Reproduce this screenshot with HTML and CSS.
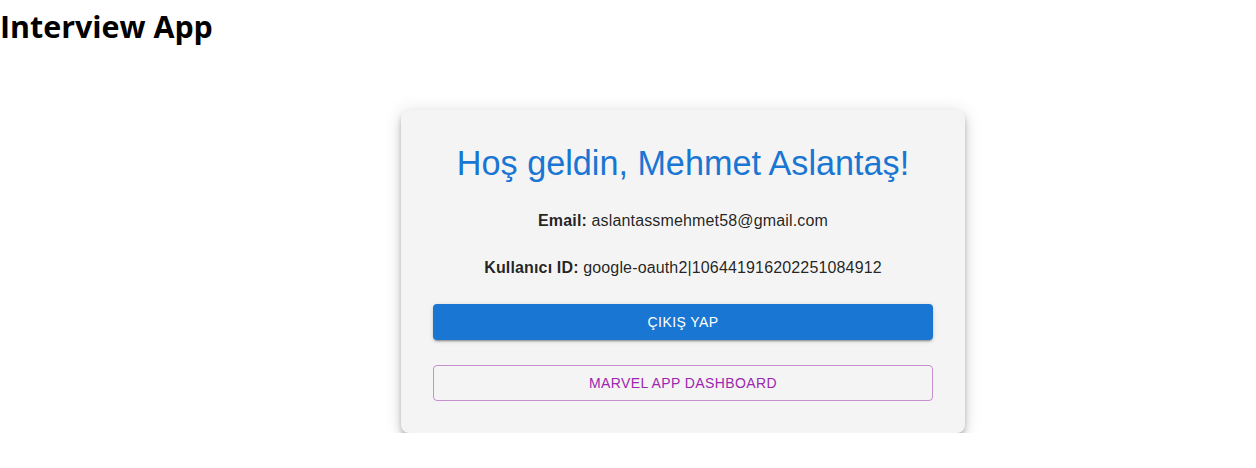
FILE: index.html
```html
<!DOCTYPE html>
<html lang="tr">
<head>
<meta charset="utf-8">
<title>Interview App</title>
<link rel="stylesheet" href="styles.css">
</head>
<body>
<h1 class="app-title">Interview App</h1>
<main class="stage">
  <section class="card">
    <h2 class="welcome">Hoş geldin, Mehmet Aslantaş!</h2>
    <p class="info"><strong>Email:</strong> aslantassmehmet58@gmail.com</p>
    <p class="info"><strong>Kullanıcı ID:</strong> google-oauth2|106441916202251084912</p>
    <button class="btn btn-primary" type="button">Çıkış Yap</button>
    <button class="btn btn-outline" type="button">Marvel App Dashboard</button>
  </section>
</main>
</body>
</html>
```
FILE: styles.css
```css
html, body {
  margin: 0;
  padding: 0;
  background: #ffffff;
  overflow: hidden;
}

body {
  font-family: "Liberation Sans", Arial, sans-serif;
  color: rgba(0, 0, 0, 0.87);
}

.app-title {
  margin: 0;
  font-family: "Open Sans", "Noto Sans", sans-serif;
  font-weight: 700;
  font-size: 30.4px;
  line-height: 54px;
  color: #000;
}

.stage {
  display: flex;
  justify-content: center;
  padding: 56px 0 0 110px;
}

.card {
  width: 500px;
  padding: 32px;
  background: #f4f4f4;
  border-radius: 8px;
  box-shadow: 0 3px 5px -1px rgba(0,0,0,0.2), 0 6px 10px 0 rgba(0,0,0,0.14), 0 1px 18px 0 rgba(0,0,0,0.12);
  display: flex;
  flex-direction: column;
  align-items: stretch;
  text-align: center;
}

.welcome {
  margin: 0 0 25px;
  font-weight: 400;
  font-size: 34.2px;
  line-height: 42px;
  color: #1976d2;
}

.info {
  margin: 0 0 23px;
  font-size: 16px;
  line-height: 24px;
  letter-spacing: 0.15px;
}

.info + .info {
  margin-bottom: 24px;
}

.info strong {
  font-weight: 700;
}

.btn {
  display: block;
  width: 100%;
  height: 36px;
  margin: 0;
  padding: 0 16px;
  border-radius: 4px;
  font-family: "Liberation Sans", Arial, sans-serif;
  font-size: 14px;
  font-weight: 500;
  letter-spacing: 0.4px;
  text-transform: uppercase;
  cursor: pointer;
}

.btn-primary {
  background: #1976d2;
  color: #fff;
  border: 0;
  box-shadow: 0 3px 1px -2px rgba(0,0,0,0.2), 0 2px 2px 0 rgba(0,0,0,0.14), 0 1px 5px 0 rgba(0,0,0,0.12);
  margin-bottom: 25px;
}

.btn-outline {
  background: transparent;
  color: #9c27b0;
  border: 1px solid rgba(156, 39, 176, 0.5);
}
```
